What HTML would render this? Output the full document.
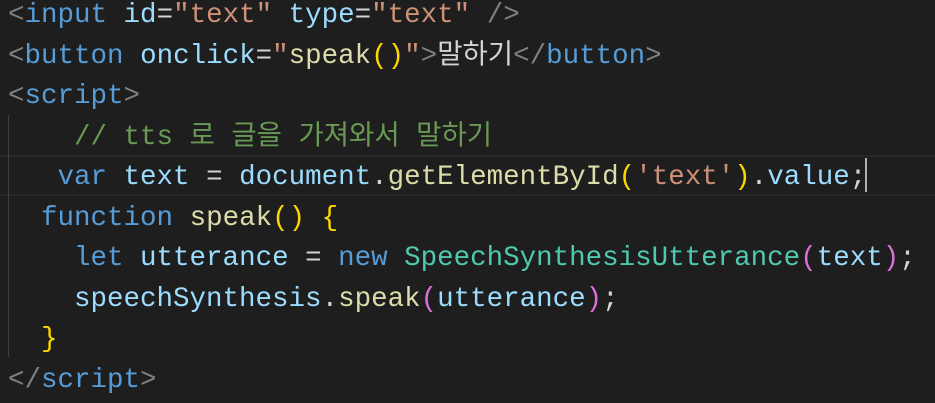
<!DOCTYPE html>
<html><head><meta charset="utf-8"><style>
html,body{margin:0;padding:0;background:#1e1e1e;width:935px;height:403px;overflow:hidden}
.code{position:absolute;left:8px;top:-4px;font-family:"Liberation Mono","Noto Sans CJK KR",monospace;font-size:27.5px;line-height:40.5px;color:#d4d4d4;white-space:pre}
.g{color:#808080}.t{color:#569cd6}.a{color:#9cdcfe}.s{color:#ce9178}.c{color:#6a9955}.f{color:#dcdcaa}.k{color:#569cd6}.cl{color:#4ec9b0}.y{color:#ffd700}.p{color:#da70d6}
.cur{position:absolute;left:0;top:155px;width:935px;height:37px;border-top:2px solid #282828;border-bottom:2px solid #282828}
.guide{position:absolute;left:8px;top:115px;width:1px;height:242px;background:#404040}
.caret{position:absolute;left:865px;top:158px;width:2px;height:34px;background:#aeafad}
</style></head><body>
<div class="cur"></div><div class="guide"></div>
<div class="code"><span class="g">&lt;</span><span class="t">input</span> <span class="a">id</span>=<span class="s">"text"</span> <span class="a">type</span>=<span class="s">"text"</span> <span class="g">/&gt;</span>
<span class="g">&lt;</span><span class="t">button</span> <span class="a">onclick</span>=<span class="s">"</span><span class="f">speak</span><span class="y">()</span><span class="s">"</span><span class="g">&gt;</span>말하기<span class="g">&lt;/</span><span class="t">button</span><span class="g">&gt;</span>
<span class="g">&lt;</span><span class="t">script</span><span class="g">&gt;</span>
    <span class="c">// tts 로 글을 가져와서 말하기</span>
   <span class="k">var</span> <span class="a">text</span> = <span class="a">document</span>.<span class="f">getElementById</span><span class="y">(</span><span class="s">'text'</span><span class="y">)</span>.<span class="a">value</span>;
  <span class="k">function</span> <span class="f">speak</span><span class="y">()</span> <span class="y">{</span>
    <span class="k">let</span> <span class="a">utterance</span> = <span class="k">new</span> <span class="cl">SpeechSynthesisUtterance</span><span class="p">(</span><span class="a">text</span><span class="p">)</span>;
    <span class="a">speechSynthesis</span>.<span class="f">speak</span><span class="p">(</span><span class="a">utterance</span><span class="p">)</span>;
  <span class="y">}</span>
<span class="g">&lt;/</span><span class="t">script</span><span class="g">&gt;</span></div>
<div class="caret"></div>
</body></html>
